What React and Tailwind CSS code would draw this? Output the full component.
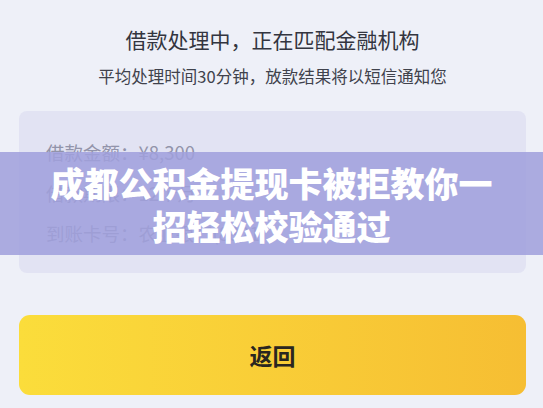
import React from 'react';

const rows = [
  { label: '借款金额：', value: '¥8,300' },
  { label: '借款期限：', value: '12个月' },
  { label: '到账卡号：', value: '农业银行(8821)' },
];

const App = () => {
  return (
    <div className="relative min-h-screen bg-[#eef0f8] pl-[19px] pr-[17px] pt-[25px] font-['Noto_Sans_CJK_SC','Noto_Sans',sans-serif]">
      <h1 className="text-center text-[21px] leading-[28px] text-[#333540]">
        借款处理中，正在匹配金融机构
      </h1>
      <p className="mt-[11px] text-center text-[16.5px] leading-[24px] text-[#40424c]">
        平均处理时间30分钟，放款结果将以短信通知您
      </p>

      {/* loan summary */}
      <div className="mt-[23px] h-[162px] rounded-[8px] bg-[#e2e3f3] pl-[27px] pt-[21px]">
        {rows.map((row) => (
          <div key={row.label} className="text-[18.5px] leading-[40.5px] text-[#9294aa]">
            {row.label}
            {row.value}
          </div>
        ))}
      </div>

      <button className="mt-[42px] flex h-[80px] w-full items-center justify-center rounded-[11px] bg-gradient-to-r from-[#fbdd3b] to-[#f6be33] text-[23px] font-bold text-[#2a2620]">
        返回
      </button>

      {/* headline banner over the card */}
      <div className="absolute left-0 right-0 top-[152px] flex h-[103px] flex-col items-center justify-center bg-[#9fa0dc]/[0.86] text-[34px] font-black leading-[43px] text-white">
        <span>成都公积金提现卡被拒教你一</span>
        <span>招轻松校验通过</span>
      </div>
    </div>
  );
};

export default App;
